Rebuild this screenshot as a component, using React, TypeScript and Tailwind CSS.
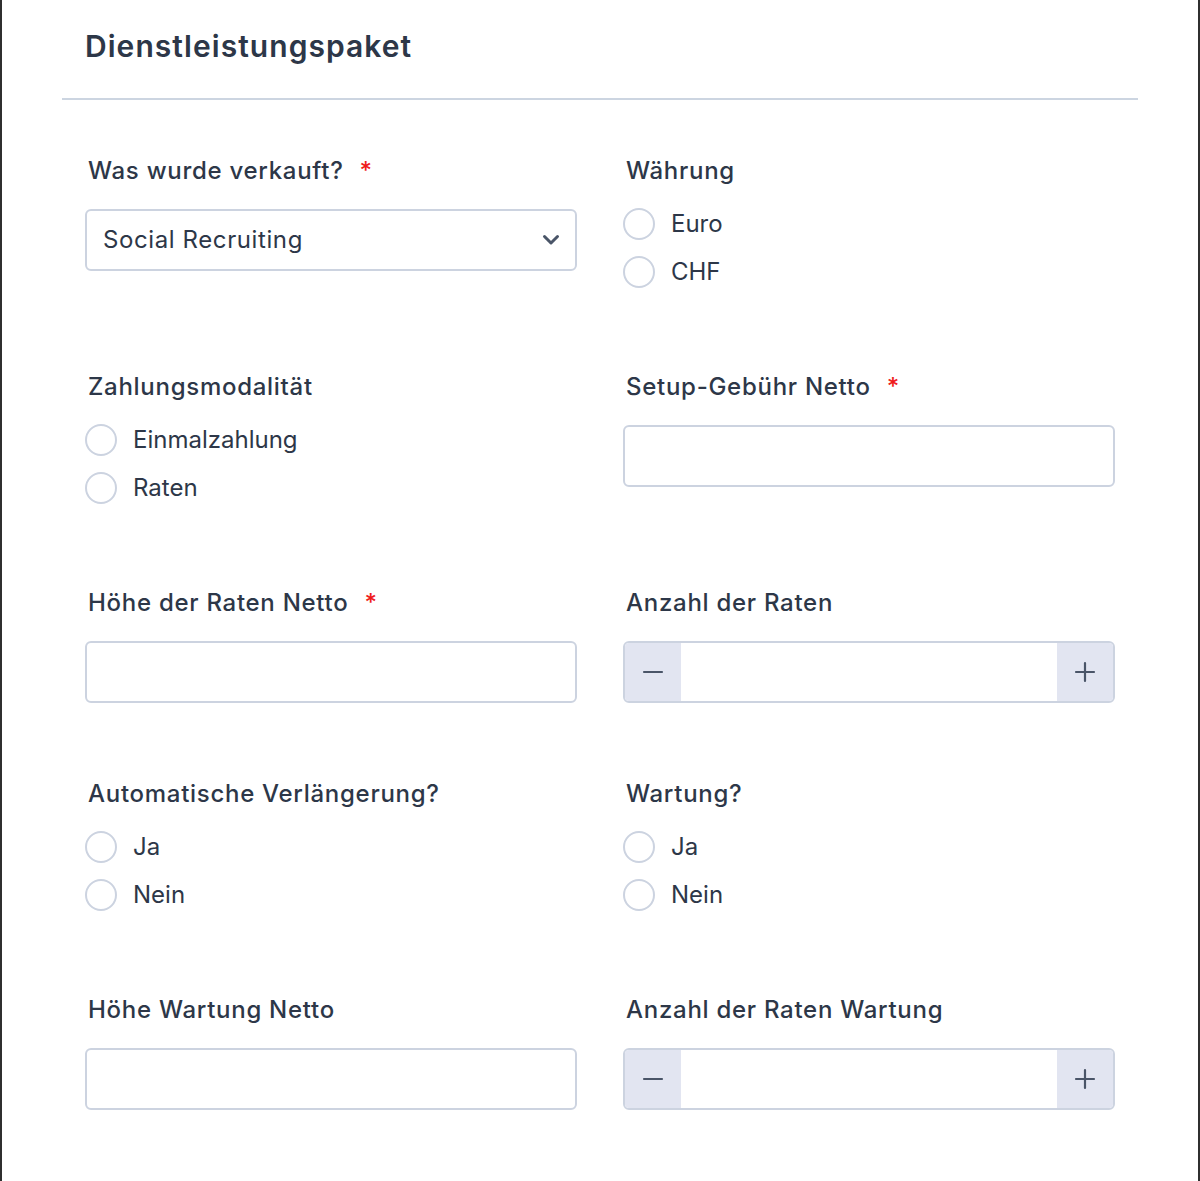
const font = { fontFamily: 'Inter, "Noto Sans", sans-serif' };

function Label({ text, required }: { text: string; required?: boolean }) {
  return (
    <div className="flex h-8 items-center pl-[3px] text-2xl font-medium tracking-[0.03em] text-[#2d3748]">
      <span>{text}</span>
      {required && <span className="ml-4 text-[#ef1c1c]">*</span>}
    </div>
  );
}

function TextInput() {
  return <div className="mt-[22px] h-[62px] rounded-md border-2 border-[#ccd3e0] bg-white" />;
}

function Select({ value }: { value: string }) {
  return (
    <div className="mt-[22px] flex h-[62px] items-center justify-between rounded-md border-2 border-[#ccd3e0] bg-white pl-4 pr-[15px]">
      <span className="text-2xl tracking-[0.025em] text-[#2d3748]">{value}</span>
      <svg width="18" height="12" viewBox="0 0 18 12" fill="none">
        <path d="M2.5 2.5 9 9l6.5-6.5" stroke="#4a5568" strokeWidth="3" strokeLinecap="round" strokeLinejoin="round" />
      </svg>
    </div>
  );
}

function Stepper() {
  return (
    <div className="mt-[22px] flex h-[62px] overflow-hidden rounded-md border-2 border-[#ccd3e0] bg-white">
      <div className="flex w-[56px] items-center justify-center bg-[#e2e5f1]">
        <svg width="22" height="22" viewBox="0 0 22 22" fill="none">
          <path d="M2 11h18" stroke="#4a5568" strokeWidth="2.2" strokeLinecap="round" />
        </svg>
      </div>
      <div className="flex-1" />
      <div className="flex w-[56px] items-center justify-center bg-[#e2e5f1]">
        <svg width="22" height="22" viewBox="0 0 22 22" fill="none">
          <path d="M2 11h18M11 2v18" stroke="#4a5568" strokeWidth="2.2" strokeLinecap="round" />
        </svg>
      </div>
    </div>
  );
}

function Radios({ options }: { options: string[] }) {
  return (
    <div className="mt-[13px] flex flex-col">
      {options.map((o) => (
        <label key={o} className="flex h-12 items-center">
          <span className="h-[32px] w-[32px] rounded-full border-2 border-[#ccd3e0] bg-white" />
          <span className="ml-4 text-2xl text-[#2d3748]">{o}</span>
        </label>
      ))}
    </div>
  );
}

export default function App() {
  return (
    <div className="min-h-[1181px] border-x-2 border-[#2f2f2f] bg-white" style={font}>
      <div className="px-[60px]">
        <h1 className="pl-[23px] pt-[28px] text-[30px] leading-9 font-semibold tracking-[0.035em] text-[#2d3748]">Dienstleistungspaket</h1>
        <div className="mt-[34px] h-[2px] bg-[#ccd5e1]" />
        <div className="grid grid-cols-2 gap-x-[46px] gap-y-[75px] px-[23px] pt-[55px]">
          <div>
            <Label text="Was wurde verkauft?" required />
            <Select value="Social Recruiting" />
          </div>
          <div>
            <Label text="Währung" />
            <Radios options={["Euro", "CHF"]} />
          </div>
          <div>
            <Label text="Zahlungsmodalität" />
            <Radios options={["Einmalzahlung", "Raten"]} />
          </div>
          <div>
            <Label text="Setup-Gebühr Netto" required />
            <TextInput />
          </div>
          <div>
            <Label text="Höhe der Raten Netto" required />
            <TextInput />
          </div>
          <div>
            <Label text="Anzahl der Raten" />
            <Stepper />
          </div>
          <div>
            <Label text="Automatische Verlängerung?" />
            <Radios options={["Ja", "Nein"]} />
          </div>
          <div>
            <Label text="Wartung?" />
            <Radios options={["Ja", "Nein"]} />
          </div>
          <div>
            <Label text="Höhe Wartung Netto" />
            <TextInput />
          </div>
          <div>
            <Label text="Anzahl der Raten Wartung" />
            <Stepper />
          </div>
        </div>
      </div>
    </div>
  );
}
